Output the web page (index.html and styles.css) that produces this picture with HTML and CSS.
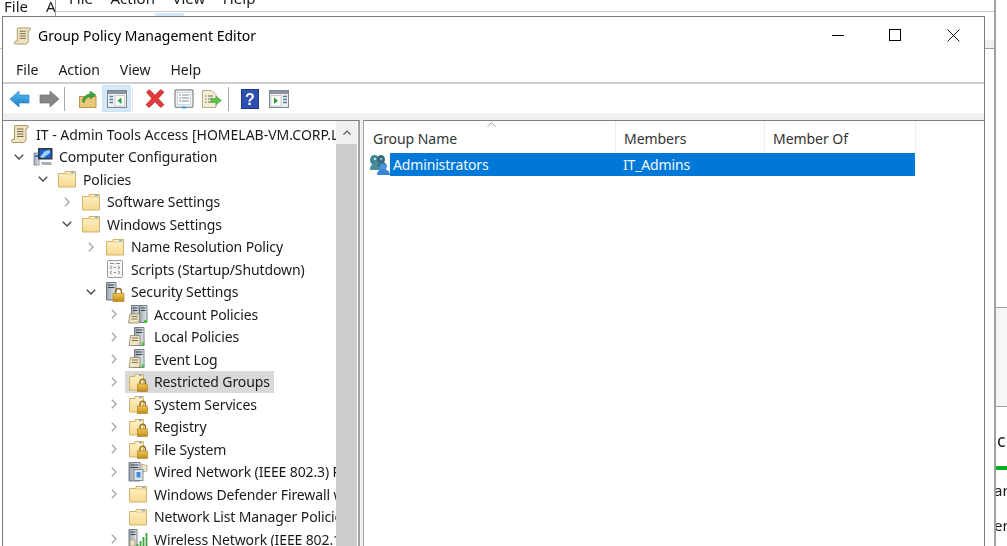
FILE: index.html
```html
<!DOCTYPE html>
<html lang="en">
<head>
    <meta charset="UTF-8">
    <title>Group Policy Management Editor</title>
    <link rel="stylesheet" href="styles.css">
</head>
<body>
    <svg class="defs" width="0" height="0">
        <defs>
            <linearGradient id="fold" x1="0" y1="0" x2="0" y2="1">
                <stop offset="0" stop-color="#fff1c8"/>
                <stop offset="1" stop-color="#f7d98f"/>
            </linearGradient>
            <linearGradient id="gold" x1="0" y1="0" x2="0" y2="1">
                <stop offset="0" stop-color="#f0c850"/>
                <stop offset="1" stop-color="#c08a1c"/>
            </linearGradient>
            <linearGradient id="tower" x1="0" y1="0" x2="1" y2="0">
                <stop offset="0" stop-color="#9aa4ae"/>
                <stop offset="1" stop-color="#e4e8ec"/>
            </linearGradient>
            <linearGradient id="blue" x1="0" y1="0" x2="0" y2="1">
                <stop offset="0" stop-color="#5cc0f4"/>
                <stop offset="1" stop-color="#1a78c8"/>
            </linearGradient>
        </defs>
        <symbol id="i-folder" viewBox="0 0 20 20">
            <path d="M1.5 4.5H8V2.5H18.5V18H1.5Z" fill="url(#fold)" stroke="#d3b26c"/>
            <path d="M8 5H18" stroke="#e6c983"/>
            <path d="M14 3.5h3" stroke="#6fb2d8" stroke-width="1.5"/>
        </symbol>
        <symbol id="i-lockfolder" viewBox="0 0 20 20">
            <path d="M1.5 4.5H7V2.5H15.5V18H1.5Z" fill="url(#fold)" stroke="#d3b26c"/>
            <path d="M11 3.5h3" stroke="#6fb2d8" stroke-width="1.5"/>
            <path d="M12 12V9.8a2.7 2.7 0 0 1 5.4 0V12" fill="none" stroke="#8a6a20" stroke-width="1.4"/>
            <rect x="9.5" y="12" width="10" height="7.5" fill="url(#gold)" stroke="#a57a1c" stroke-width=".6"/>
        </symbol>
        <symbol id="i-scroll" viewBox="0 0 20 20">
            <path d="M5 1.5H17.5C18.8 1.5 19 3.5 17.5 4L16 4.5V15C16 17 15 18.5 13.5 18.5H2.5C1 18.5 .8 15.5 3 15.5H4.5V3C4.5 2 4.6 1.5 5 1.5Z" fill="#f1e3bd" stroke="#a8986e"/>
            <path d="M7 5h6.5M7 7.5h6.5M7 10h6.5M7 12.5h6.5" stroke="#6f6a5a"/>
        </symbol>
        <symbol id="i-computer" viewBox="0 0 20 20">
            <rect x="1" y="6" width="5" height="12" fill="url(#tower)" stroke="#6b7680" stroke-width=".7"/>
            <rect x="5" y="1" width="14.5" height="11.5" fill="#32393f"/>
            <rect x="6.5" y="2.5" width="11.5" height="8.5" fill="#1f5fd0"/>
            <path d="M7 10L12 4L17 3V6L10 11Z" fill="#9fd0f5"/>
            <path d="M8 15h10l1 3H9Z" fill="#a9b1b8"/>
            <rect x="2" y="8" width="3" height="2" fill="#2f7fc8"/>
        </symbol>
        <symbol id="i-script" viewBox="0 0 20 20">
            <rect x="2.5" y="1.5" width="15" height="17" rx="1" fill="#f7f7f7" stroke="#9a9a9a"/>
            <path d="M5 4.5h4M11 4.5h4M7 7l-2 1.5 2 1.5M13 7l2 1.5-2 1.5M9 8.5h2M7 12l-2 1.5 2 1.5M13 12l2 1.5-2 1.5M9 13.5h2" fill="none" stroke="#7e7e7e" stroke-width=".9"/>
        </symbol>
        <symbol id="i-sec" viewBox="0 0 20 20">
            <path d="M1.5 .5H11V18H1.5Z" fill="url(#tower)" stroke="#56606a" stroke-width=".8"/>
            <path d="M3 3h6.5M3 5.5h6.5" stroke="#3c464f"/>
            <path d="M10.5 11.5V9.5a3 3 0 0 1 6 0v2" fill="none" stroke="#8a6a20" stroke-width="1.4"/>
            <rect x="8" y="11.5" width="11" height="8" fill="url(#gold)" stroke="#a57a1c" stroke-width=".6"/>
        </symbol>
        <symbol id="i-policy" viewBox="0 0 20 20">
            <path d="M6.5 .5H16V18.5H6.5Z" fill="url(#tower)" stroke="#5c6670" stroke-width=".8"/>
            <path d="M8 3h6.5M8 5.5h6.5" stroke="#3c464f"/>
            <path d="M2.5 8.5H12V16L11 18.5H1Z" fill="#efe3c2" stroke="#8e8466" stroke-width=".8"/>
            <path d="M4 11h6M4 13.5h6" stroke="#7c7560"/>
            <rect x="13.5" y="15.5" width="3" height="3" fill="#4cc43c"/>
        </symbol>
        <symbol id="i-account" viewBox="0 0 20 20">
            <path d="M3.5 1.5H11V15H3.5Z" fill="url(#tower)" stroke="#5c6670" stroke-width=".8"/>
            <path d="M11.5 1.5H19V18.5H11.5Z" fill="url(#tower)" stroke="#5c6670" stroke-width=".8"/>
            <path d="M5 4h4.5M5 6.5h4.5M13 4h4.5M13 6.5h4.5" stroke="#3c464f"/>
            <path d="M2 10H11.5V16L10.5 19H.5Z" fill="#efe3c2" stroke="#8e8466" stroke-width=".8"/>
            <path d="M3.5 12.5h6M3.5 15h6" stroke="#7c7560"/>
            <rect x="16" y="16" width="3" height="3" fill="#4cc43c"/>
        </symbol>
        <symbol id="i-wired" viewBox="0 0 20 20">
            <path d="M1 .5H12V19H1Z" fill="url(#tower)" stroke="#5c6670" stroke-width=".8"/>
            <path d="M2.5 3h8M2.5 5.5h8" stroke="#3c464f"/>
            <path d="M13 2L19 3.5V9L15 10Z" fill="#efe3c2" stroke="#8e8466" stroke-width=".6"/>
            <rect x="6" y="7.5" width="9" height="11" fill="#dfe5ea" stroke="#6d7882" stroke-width=".8"/>
            <rect x="8.5" y="10" width="4" height="5.5" fill="#3e8ed6"/>
        </symbol>
        <symbol id="i-wireless" viewBox="0 0 20 20">
            <path d="M1 .5H9V19H1Z" fill="url(#tower)" stroke="#5c6670" stroke-width=".8"/>
            <path d="M2.5 3h5M2.5 5.5h5" stroke="#3c464f"/>
            <path d="M5 18.5h15M9.5 15v4M12.5 12v7M15.5 8v11M18.5 4v15" stroke="#3ea33a" stroke-width="1.8"/>
            <path d="M2 11h5v6H2Z" fill="#efe3c2" stroke="#8e8466" stroke-width=".6"/>
        </symbol>
        <symbol id="i-group" viewBox="0 0 20 21">
            <ellipse cx="4.5" cy="6" rx="4.5" ry="5" fill="#3f8793"/>
            <path d="M0 16c0-5 3-7 5-7s6 2 6 7Z" fill="#4a8f98"/>
            <ellipse cx="11" cy="5.5" rx="4" ry="4.5" fill="#3a6a7e"/>
            <path d="M7 13c0-4 2-5 5-5s5 2 5 5Z" fill="#3b6f86"/>
            <ellipse cx="13" cy="13" rx="3.5" ry="3.5" fill="#4b93de"/>
            <path d="M7 21c0-4 3-6 6-6s7 2 7 6Z" fill="#3a84d8"/>
            <circle cx="5" cy="5" r="1.3" fill="#b9dbe4"/>
            <circle cx="11" cy="5" r="1.2" fill="#8fb8c8"/>
        </symbol>
        <symbol id="i-chev-open" viewBox="0 0 10 10"><path d="M1.5 3.2L5 6.7 8.5 3.2" fill="none" stroke="#444" stroke-width="1.1"/></symbol>
        <symbol id="i-chev-closed" viewBox="0 0 10 10"><path d="M3.2 1.5L6.7 5 3.2 8.5" fill="none" stroke="#a6a6a6" stroke-width="1.1"/></symbol>
    </svg>

    <!-- windows behind the editor -->
    <div class="far-window">
        <span class="far-file">File</span>
        <span class="far-action">A</span>
        <div class="far-rule"></div>
        <div class="far-panel"></div>
        <span class="far-c">c</span>
        <div class="far-green"></div>
        <span class="far-ar">ar</span>
        <span class="far-er">er</span>
    </div>

    <div class="back-window">
        <div class="back-menu">
            <span>File</span><span>Action</span><span>View</span><span>Help</span>
        </div>
        <div class="back-tools"><div class="back-active"></div></div>
        <div class="back-band"></div>
    </div>

    <div class="window">
        <div class="titlebar">
            <svg class="title-icon"><use href="#i-scroll"/></svg>
            <span class="title-text">Group Policy Management Editor</span>
            <div class="controls">
                <svg width="46" height="37" viewBox="0 0 46 37"><path d="M11 18.5H23" stroke="#000"/></svg>
                <svg width="58" height="37" viewBox="0 0 58 37"><rect x="22.5" y="12.5" width="11" height="11" fill="none" stroke="#000"/></svg>
                <svg width="59" height="37" viewBox="0 0 59 37"><path d="M22.5 12.5L34.5 24.5M34.5 12.5L22.5 24.5" stroke="#000" stroke-width=".9"/></svg>
            </div>
        </div>
        <div class="menubar">
            <span>File</span><span>Action</span><span>View</span><span>Help</span>
        </div>
        <div class="toolbar">
            <div class="tool">
                <svg width="22" height="20" viewBox="0 0 22 20"><path d="M1 10L10 2V6H20V14H10V18Z" fill="url(#blue)" stroke="#2a86cc" stroke-width=".7"/></svg>
            </div>
            <div class="tool">
                <svg width="22" height="20" viewBox="0 0 22 20"><path d="M21 10L12 2V6H2V14H12V18Z" fill="#858585" stroke="#707070" stroke-width=".7"/></svg>
            </div>
            <div class="tool-sep"></div>
            <div class="tool tool-up">
                <svg width="20" height="20" viewBox="0 0 20 20"><path d="M1.5 7.5H18V18.5H1.5Z" fill="#e9c878" stroke="#b89548"/><path d="M4 12C6 7 9 5 12 5V2L18 6L12 10V7.5C9 8 7 10 6 14Z" fill="#3fa03a" stroke="#2c8030" stroke-width=".5"/></svg>
            </div>
            <div class="tool tool-on">
                <svg width="20" height="18" viewBox="0 0 20 18"><rect x=".5" y=".5" width="19" height="17" fill="#eef0f2" stroke="#7d8790"/><rect x="1" y="1" width="18" height="3" fill="#8b949c"/><path d="M2.5 6.5H6M2.5 9.5H6M2.5 12.5H6" stroke="#5a7ea0" stroke-width="1.6"/><rect x="8" y="5.5" width="9.5" height="10.5" fill="#fff" stroke="#a8b2ba" stroke-width=".6"/><path d="M14.5 7.5V14L10.5 10.7Z" fill="#2f9a36"/></svg>
            </div>
            <div class="tool-sep tool-sep-faint"></div>
            <div class="tool tool-del">
                <svg width="22" height="21" viewBox="0 0 20 20"><path d="M2 4L4.5 1.5 10 7 15.5 1.5 18.5 4 13 10 18.5 16 15.5 18.5 10 13 4.5 18.5 1.5 16 7 10Z" fill="#e13a3a" stroke="#c22a2a" stroke-width=".8" stroke-linejoin="round"/></svg>
            </div>
            <div class="tool">
                <svg width="20" height="20" viewBox="0 0 20 20"><rect x="1" y=".8" width="18" height="17.5" rx="1" fill="#eceef0" stroke="#8a8f94" stroke-width="1.3"/><rect x="3.5" y="3.5" width="13" height="12" fill="#fff" stroke="#b5bbc0" stroke-width=".5"/><path d="M5 6h2M8 6h7M5 9h2M8 9h7M5 12h2M8 12h7" stroke="#7c8a98"/><rect x="8" y="17.5" width="4" height="2" fill="#35a4dc"/></svg>
            </div>
            <div class="tool tool-export">
                <svg width="21" height="20" viewBox="0 0 21 20"><path d="M1.5 1.5H11L15 5.5V18.5H1.5Z" fill="#f5eed6" stroke="#b8ad88"/><path d="M4 7h1.5M7 7h5M4 10h1.5M7 10h3M4 13h1.5M7 13h3" stroke="#6a6a60"/><path d="M10 9.5H15V7L20.5 11.5 15 16V13.5H10Z" fill="#5ec04c" stroke="#3f9c38" stroke-width=".5"/></svg>
            </div>
            <div class="tool-sep"></div>
            <div class="tool tool-help">
                <svg width="18" height="20" viewBox="0 0 18 20"><rect x=".5" y=".5" width="17" height="19" fill="#2c4fb0" stroke="#1e3a8c"/><text x="9" y="16" text-anchor="middle" class="help-mark">?</text></svg>
            </div>
            <div class="tool">
                <svg width="20" height="18" viewBox="0 0 20 18"><rect x=".5" y=".5" width="19" height="17" fill="#eef0f2" stroke="#7d8790"/><rect x="1" y="1" width="18" height="3" fill="#8b949c"/><rect x="2" y="5.5" width="10" height="10.5" fill="#fff" stroke="#a8b2ba" stroke-width=".6"/><path d="M5 7.5V14L9 10.7Z" fill="#2f9a36"/><path d="M14 6.5H18M14 9.5H18M14 12.5H18" stroke="#5a7ea0" stroke-width="1.6"/></svg>
            </div>
        </div>
        <div class="band"></div>

        <div class="panes">
            <div class="tree-pane">
                <div class="tree">
                    <div class="row lvl-0"><span class="node"><svg class="ico"><use href="#i-scroll"/></svg><span>IT - Admin Tools Access [HOMELAB-VM.CORP.LOCAL] Policy</span></span></div>
                    <div class="row lvl-1"><svg class="chev"><use href="#i-chev-open"/></svg><span class="node"><svg class="ico"><use href="#i-computer"/></svg><span>Computer Configuration</span></span></div>
                    <div class="row lvl-2"><svg class="chev"><use href="#i-chev-open"/></svg><span class="node"><svg class="ico"><use href="#i-folder"/></svg><span>Policies</span></span></div>
                    <div class="row lvl-3"><svg class="chev"><use href="#i-chev-closed"/></svg><span class="node"><svg class="ico"><use href="#i-folder"/></svg><span>Software Settings</span></span></div>
                    <div class="row lvl-3"><svg class="chev"><use href="#i-chev-open"/></svg><span class="node"><svg class="ico"><use href="#i-folder"/></svg><span>Windows Settings</span></span></div>
                    <div class="row lvl-4"><svg class="chev"><use href="#i-chev-closed"/></svg><span class="node"><svg class="ico"><use href="#i-folder"/></svg><span>Name Resolution Policy</span></span></div>
                    <div class="row lvl-4"><span class="chev"></span><span class="node"><svg class="ico"><use href="#i-script"/></svg><span>Scripts (Startup/Shutdown)</span></span></div>
                    <div class="row lvl-4"><svg class="chev"><use href="#i-chev-open"/></svg><span class="node"><svg class="ico"><use href="#i-sec"/></svg><span>Security Settings</span></span></div>
                    <div class="row lvl-5"><svg class="chev"><use href="#i-chev-closed"/></svg><span class="node"><svg class="ico"><use href="#i-account"/></svg><span>Account Policies</span></span></div>
                    <div class="row lvl-5"><svg class="chev"><use href="#i-chev-closed"/></svg><span class="node"><svg class="ico"><use href="#i-policy"/></svg><span>Local Policies</span></span></div>
                    <div class="row lvl-5"><svg class="chev"><use href="#i-chev-closed"/></svg><span class="node"><svg class="ico"><use href="#i-policy"/></svg><span>Event Log</span></span></div>
                    <div class="row lvl-5"><svg class="chev"><use href="#i-chev-closed"/></svg><span class="node node-current"><svg class="ico"><use href="#i-lockfolder"/></svg><span>Restricted Groups</span></span></div>
                    <div class="row lvl-5"><svg class="chev"><use href="#i-chev-closed"/></svg><span class="node"><svg class="ico"><use href="#i-lockfolder"/></svg><span>System Services</span></span></div>
                    <div class="row lvl-5"><svg class="chev"><use href="#i-chev-closed"/></svg><span class="node"><svg class="ico"><use href="#i-lockfolder"/></svg><span>Registry</span></span></div>
                    <div class="row lvl-5"><svg class="chev"><use href="#i-chev-closed"/></svg><span class="node"><svg class="ico"><use href="#i-lockfolder"/></svg><span>File System</span></span></div>
                    <div class="row lvl-5"><svg class="chev"><use href="#i-chev-closed"/></svg><span class="node"><svg class="ico"><use href="#i-wired"/></svg><span>Wired Network (IEEE 802.3) Policies</span></span></div>
                    <div class="row lvl-5"><svg class="chev"><use href="#i-chev-closed"/></svg><span class="node"><svg class="ico"><use href="#i-folder"/></svg><span>Windows Defender Firewall with Advanced Security</span></span></div>
                    <div class="row lvl-5"><span class="chev"></span><span class="node"><svg class="ico"><use href="#i-folder"/></svg><span>Network List Manager Policies</span></span></div>
                    <div class="row lvl-5"><svg class="chev"><use href="#i-chev-closed"/></svg><span class="node"><svg class="ico"><use href="#i-wireless"/></svg><span>Wireless Network (IEEE 802.11) Policies</span></span></div>
                </div>
                <div class="scrollbar">
                    <div class="scroll-up">
                        <svg width="10" height="10" viewBox="0 0 10 10"><path d="M1.5 6.7L5 3.2 8.5 6.7" fill="none" stroke="#505050" stroke-width="1.2"/></svg>
                    </div>
                    <div class="scroll-thumb"></div>
                </div>
            </div>
            <div class="list-pane">
                <div class="list-head">
                    <span class="col col-name">Group Name
                        <svg class="sort" width="9" height="5" viewBox="0 0 9 5"><path d="M.5 4.5L4.5 .8 8.5 4.5" fill="none" stroke="#a0a0a0"/></svg>
                    </span>
                    <span class="col col-members">Members</span>
                    <span class="col col-of">Member Of</span>
                </div>
                <div class="list-row">
                    <svg class="group-ico"><use href="#i-group"/></svg>
                    <div class="selected">
                        <span class="cell-name">Administrators</span>
                        <span class="cell-members">IT_Admins</span>
                    </div>
                </div>
            </div>
        </div>
    </div>
</body>
</html>
```

FILE: styles.css
```css
html, body {
    margin: 0;
    padding: 0;
    height: 100%;
    overflow: hidden;
}
body {
    position: relative;
    background: #fff;
    font-family: "Noto Sans", "Open Sans", sans-serif;
    font-size: 14px;
    color: #1a1a1a;
}
.defs {
    position: absolute;
}

/* far back window */
.far-window {
    position: absolute;
    inset: 0;
}
.far-window span {
    position: absolute;
    font-size: 15px;
    line-height: 20px;
    filter: blur(.3px);
}
.far-file { left: 4px; top: -4px; }
.far-action { left: 46px; top: -4px; }
.far-rule {
    position: absolute;
    left: 0;
    top: 48px;
    width: 3px;
    height: 1px;
    background: #c8c8c8;
}
.far-panel {
    position: absolute;
    left: 996px;
    right: 0;
    top: 307px;
    height: 100px;
    box-sizing: border-box;
    background: #f6f6f6;
    border-top: 1px solid #a0a0a0;
    border-bottom: 1px solid #a0a0a0;
}
.far-window .far-c { left: 997px; top: 430px; font-size: 18px; }
.far-green {
    position: absolute;
    left: 996px;
    right: 0;
    top: 466px;
    height: 4px;
    background: #06b025;
}
.far-ar { left: 994px; top: 480px; }
.far-er { left: 994px; top: 515px; }

/* second window */
.back-window {
    position: absolute;
    left: 55px;
    top: -20px;
    width: 941px;
    height: 580px;
    box-sizing: border-box;
    background: #fff;
    border: 1px solid #a0a0a0;
    border-right-width: 2px;
}
.back-menu {
    display: flex;
    height: 31px;
    padding: 7px 0 0 13px;
    box-sizing: border-box;
    font-size: 15px;
    line-height: 20px;
    border-bottom: 1px solid #c8c8c8;
    filter: blur(.3px);
}
.back-menu span { margin-right: 17.5px; }
.back-tools {
    position: relative;
    height: 28px;
}
.back-active {
    position: absolute;
    left: 99px;
    top: 1px;
    width: 29px;
    height: 27px;
    background: #d5e8f8;
}
.back-band {
    height: 8px;
    background: #f0f0f0;
    border-bottom: 1px solid #a0a0a0;
}

/* editor window */
.window {
    position: absolute;
    left: 2px;
    top: 16px;
    width: 983px;
    height: 540px;
    box-sizing: border-box;
    display: flex;
    flex-direction: column;
    background: #fff;
    border: 1px solid #7a7a7a;
}
.titlebar {
    display: flex;
    align-items: center;
    height: 37px;
    flex: none;
    padding-left: 10px;
}
.title-icon {
    width: 19px;
    height: 20px;
    margin-right: 6px;
    filter: blur(.3px);
}
.title-text {
    font-size: 14px;
    color: #000;
    filter: blur(.25px);
}
.controls {
    display: flex;
    margin-left: auto;
}
.menubar {
    display: flex;
    align-items: center;
    height: 30px;
    flex: none;
    padding: 2px 0 0 13px;
    box-sizing: border-box;
    border-bottom: 2px solid #d0d0d0;
}
.menubar span {
    margin-right: 20px;
    filter: blur(.25px);
}
.toolbar {
    display: flex;
    align-items: center;
    height: 29px;
    flex: none;
    padding-left: 2px;
    box-sizing: border-box;
}
.tool {
    display: flex;
    align-items: center;
    justify-content: center;
    width: 29px;
    height: 27px;
    flex: none;
}
.tool svg { filter: blur(.4px); }
.tool-on {
    background: #d5e8f8;
    box-shadow: inset 0 0 0 1px #cce4f7;
}
.tool-sep {
    width: 1px;
    height: 24px;
    margin-left: 1px;
    background: #a8a8a8;
}
.tool-sep-faint { background: #e4e4e4; }
.tool-up { margin-left: 8px; }
.tool-del { margin-left: 7px; }
.tool-export { margin: 0 1px 0 -1px; }
.tool-help { margin-left: 6px; }
.help-mark {
    font-family: "Liberation Sans", sans-serif;
    font-size: 16px;
    font-weight: 700;
    fill: #fff;
}
.band {
    height: 7px;
    flex: none;
    background: #f0f0f0;
}
.panes {
    display: flex;
    flex: 1;
    min-height: 0;
    gap: 3px;
    background: #f0f0f0;
}

/* tree */
.tree-pane {
    display: flex;
    width: 357px;
    flex: none;
    box-sizing: border-box;
    background: #fff;
    border-top: 1px solid #808080;
    border-right: 2px solid #a0a0a0;
}
.tree {
    width: 333px;
    flex: none;
    overflow: hidden;
    padding-top: 2px;
    letter-spacing: -.12px;
    filter: blur(.3px);
}
.row {
    display: flex;
    align-items: center;
    height: 22.5px;
    white-space: nowrap;
}
.lvl-0 {
    padding-left: 4px;
    letter-spacing: 0;
}
.lvl-1 { padding-left: 10px; }
.lvl-2 { padding-left: 34px; }
.lvl-3 { padding-left: 58px; }
.lvl-4 { padding-left: 82px; }
.lvl-5 { padding-left: 105px; }
.chev {
    display: inline-block;
    width: 12px;
    height: 12px;
    flex: none;
    margin-right: 5px;
}
.node {
    display: flex;
    align-items: center;
    height: 22px;
    padding: 0 4px 0 3px;
}
.node-current { background: #d9d9d9; }
.ico {
    width: 20px;
    height: 20px;
    flex: none;
    margin-right: 6px;
}
.scrollbar {
    width: 21px;
    flex: none;
    display: flex;
    flex-direction: column;
    background: #f0f0f0;
}
.scroll-up {
    display: flex;
    align-items: center;
    justify-content: center;
    height: 23px;
    flex: none;
}
.scroll-thumb {
    flex: 1;
    background: #cdcdcd;
}

/* list */
.list-pane {
    flex: 1;
    background: #fff;
    border-top: 1px solid #808080;
    border-left: 1px solid #a0a0a0;
}
.list-head {
    display: flex;
    height: 31px;
    color: #333;
    letter-spacing: -.05px;
}
.col {
    position: relative;
    display: flex;
    align-items: center;
    box-sizing: border-box;
    padding: 4px 0 0 8px;
    border-right: 1px solid #eeeeee;
    white-space: nowrap;
}
.col-name {
    width: 252px;
    padding-left: 9px;
}
.col-members { width: 149px; }
.col-of { width: 151px; }
.sort {
    position: absolute;
    left: 123px;
    top: 1px;
}
.list-row {
    display: flex;
    align-items: center;
    height: 24px;
}
.group-ico {
    width: 20px;
    height: 21px;
    margin: 0 0 0 6px;
    flex: none;
    filter: blur(.4px);
}
.selected {
    display: flex;
    align-items: center;
    width: 525px;
    height: 23px;
    background: #0078d7;
    color: #f4f9fd;
    letter-spacing: -.15px;
}
.cell-name {
    width: 225px;
    box-sizing: border-box;
    padding-left: 3px;
}
.cell-members { padding-left: 8px; }
```
